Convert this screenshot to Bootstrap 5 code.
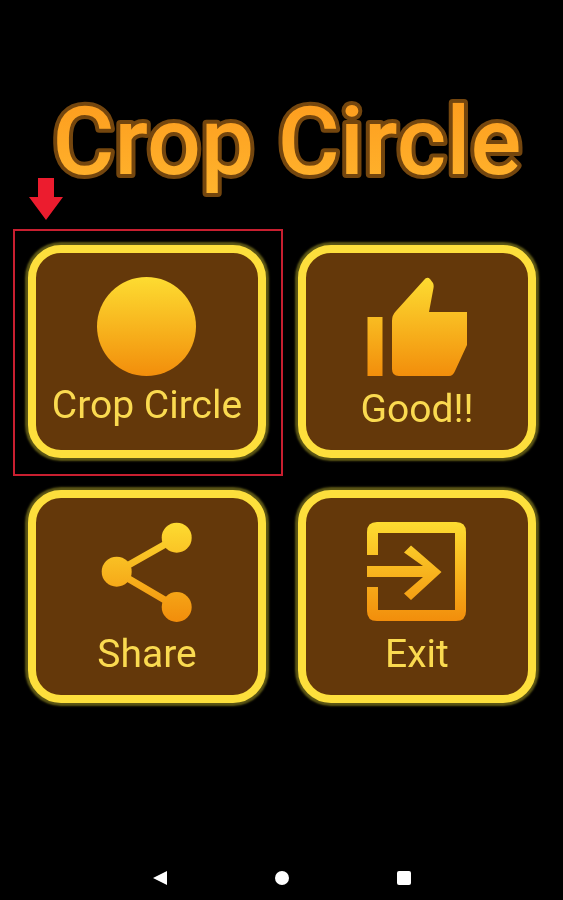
<!DOCTYPE html>
<html lang="en">
<head>
<meta charset="utf-8">
<title>Crop Circle</title>
<link href="https://cdn.jsdelivr.net/npm/bootstrap@5.3.0/dist/css/bootstrap.min.css" rel="stylesheet">
<style>
html, body { background: #000; margin: 0; }
.app-screen { width: 563px; height: 900px; background: #000; font-family: Roboto, "Liberation Sans", sans-serif; overflow: hidden; filter: blur(.4px); }
.hero { display: block; width: 563px; height: 195px; margin-top: 50px; flex: none; }
.hero text { font-family: Roboto, "Liberation Sans", sans-serif; font-size: 95px; font-weight: 500; stroke: #74460e; stroke-width: 8px; paint-order: stroke fill; stroke-linejoin: round; }
.tile-grid { display: grid; grid-template-columns: 238px 238px; grid-auto-rows: 213px; column-gap: 32px; row-gap: 32px; margin-left: 28px; }
.tile { position: relative; background: #64380a; border: 8px solid #fddf3c; border-radius: 33px; box-shadow: 0 0 2px 3px #5c5615; padding-top: 24px; color: #fada50; text-decoration: none; }
.tile-icon { display: block; width: 100px; height: 100px; flex: none; }
.tile-text { font-size: 39px; line-height: 46px; margin-top: 9px; white-space: nowrap; }
.tile-text-sm { font-size: 39px; line-height: 46px; margin-top: 5px; white-space: nowrap; }
.red-frame { position: absolute; top: -24px; left: -23px; width: 270px; height: 247px; border: 2px solid #c81f30; pointer-events: none; }
.red-arrow { position: absolute; top: -75px; left: -7px; width: 34px; height: 42px; }
.sys-bar { height: 44px; margin-top: auto; gap: 106px; }
.sys-bar svg { display: block; width: 16px; height: 16px; }
</style>
</head>
<body>
<div class="app-screen d-flex flex-column">
  <svg class="hero" viewBox="0 0 563 195" role="img" aria-label="Crop Circle">
    <defs>
      <linearGradient id="heroFill" x1="0" y1="0" x2="0" y2="1">
        <stop offset="0" stop-color="#fd9a1c"/>
        <stop offset="1" stop-color="#ffb52e"/>
      </linearGradient>
    </defs>
    <text x="287" y="124" text-anchor="middle" fill="url(#heroFill)">Crop Circle</text>
  </svg>

  <svg width="0" height="0" class="position-absolute">
    <defs>
      <linearGradient id="iconFill" gradientUnits="userSpaceOnUse" x1="0" y1="0" x2="0" y2="100">
        <stop offset="0" stop-color="#fddc31"/>
        <stop offset="1" stop-color="#f28d0b"/>
      </linearGradient>
    </defs>
  </svg>

  <div class="tile-grid">
    <a class="tile d-flex flex-column align-items-center" href="#">
      <svg class="tile-icon" viewBox="0 0 100 100"><circle cx="49.500" cy="49.500" r="49.500" fill="url(#iconFill)"/></svg>
      <span class="tile-text-sm">Crop Circle</span>
      <span class="red-frame"></span>
      <svg class="red-arrow" viewBox="0 0 34 42"><path d="M9 0H25V19H34L17 42L0 19H9Z" fill="#ec1c2e"/></svg>
    </a>
    <a class="tile d-flex flex-column align-items-center" href="#">
      <svg class="tile-icon" viewBox="0 0 100 100"><path fill="url(#iconFill)" d="M0.500 40H15.500V99H0.500Z"/><path fill="url(#iconFill)" d="M25 44Q25 38 29 34L57 3Q60 -1 63 2L66 6Q67 8 66.500 11L62 35H100V68L88 94Q86 99 82 99H32Q25 99 25 92Z"/></svg>
      <span class="tile-text">Good!!</span>
    </a>
    <a class="tile d-flex flex-column align-items-center" href="#">
      <svg class="tile-icon" viewBox="0 0 100 100"><path d="M79.700 15.700L19.700 49.700L79.700 85" fill="none" stroke="url(#iconFill)" stroke-width="7"/><circle cx="79.700" cy="15.700" r="15" fill="url(#iconFill)"/><circle cx="19.700" cy="49.700" r="15" fill="url(#iconFill)"/><circle cx="79.700" cy="85" r="15" fill="url(#iconFill)"/></svg>
      <span class="tile-text">Share</span>
    </a>
    <a class="tile d-flex flex-column align-items-center" href="#">
      <svg class="tile-icon" viewBox="0 0 100 100"><path fill="url(#iconFill)" d="M0 33V10Q0 0 10 0H89Q99 0 99 10V89Q99 99 89 99H10Q0 99 0 89V65H11V88H88V11H11V33Z"/><path fill="url(#iconFill)" d="M0 44H56L37 30.500L44 23.500L74.500 50L44 78L37 71.500L56 55H0Z"/></svg>
      <span class="tile-text">Exit</span>
    </a>
  </div>

  <div class="sys-bar d-flex justify-content-center align-items-center">
    <svg viewBox="0 0 16 16"><path d="M1 8L15 1V15Z" fill="#fff"/></svg>
    <svg viewBox="0 0 16 16"><circle cx="8" cy="8" r="7" fill="#fff"/></svg>
    <svg viewBox="0 0 16 16"><rect x="1" y="1" width="14" height="14" rx="2" fill="#fff"/></svg>
  </div>
</div>
<script src="https://cdn.jsdelivr.net/npm/bootstrap@5.3.0/dist/js/bootstrap.bundle.min.js"></script>
</body>
</html>
